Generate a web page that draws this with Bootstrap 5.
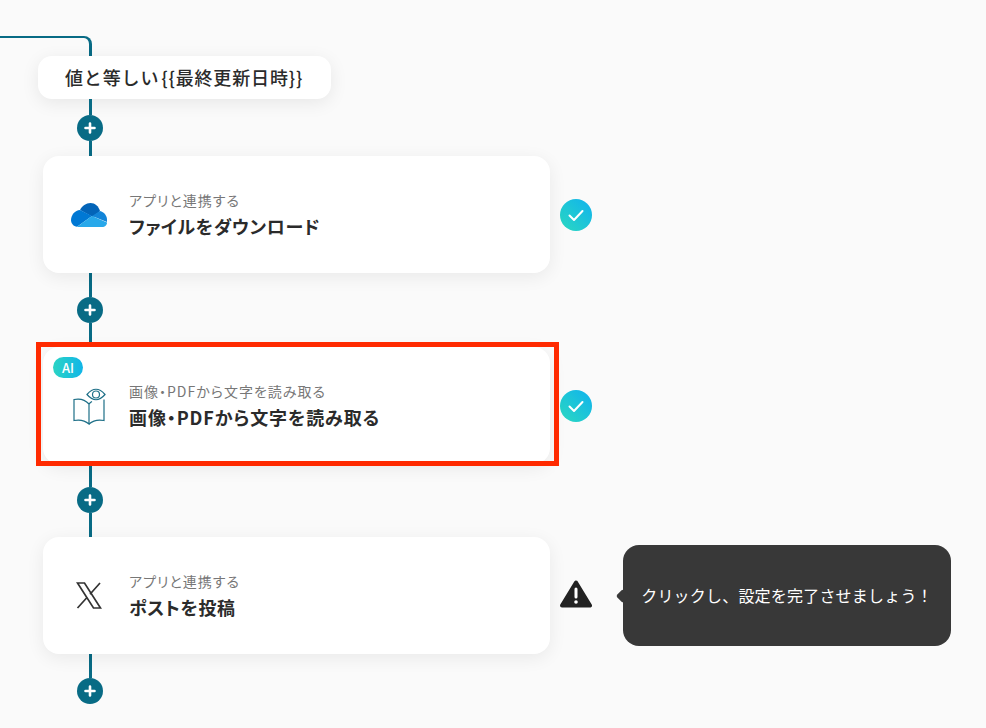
<!DOCTYPE html>
<html lang="ja">
<head>
    <meta charset="UTF-8">
    <title>フロー</title>
    <meta name="viewport" content="width=device-width, initial-scale=1">
    <link href="https://cdn.jsdelivr.net/npm/bootstrap@5.3.3/dist/css/bootstrap.min.css" rel="stylesheet">
    <style>
        body {
            background: #fafafa;
            color: #2b2b2b;
            font-family: "Noto Sans CJK JP", "Noto Sans", sans-serif;
            overflow: hidden;
        }
        .top-line {
            width: 92px;
            height: 20px;
            margin-top: 36px;
            border-top: 2px solid #086b85;
            border-right: 3px solid #086b85;
            border-top-right-radius: 8px;
        }
        .cond-pill {
            width: 293px;
            height: 43px;
            margin-left: 38px;
            padding-left: 27px;
            background: #fff;
            border-radius: 14px;
            font-size: 18px;
            font-weight: 500;
            letter-spacing: .85px;
            word-spacing: -3px;
            box-shadow: 0 4px 18px rgba(0, 0, 0, .08);
        }
        .flow-wrap { margin-left: 43px; }
        .link-box { width: 26px; margin-left: 34px; }
        .link-line { width: 3px; background: #086b85; flex: 1 1 0; }
        .link-plus {
            width: 26px;
            height: 26px;
            border-radius: 50%;
            background: #086b85;
            flex: none;
        }
        .link-a { height: 57px; }
        .link-b { height: 74px; }
        .link-c { height: 73px; }
        .link-c .link-line:first-child { flex: 0 0 23px; }
        .link-end { height: 50px; }
        .flow-card {
            width: 507px;
            height: 117px;
            padding-left: 28px;
            gap: 22px;
            border: 0;
            border-radius: 16px;
            background: #fff;
            box-shadow: 0 4px 18px rgba(0, 0, 0, .07);
            flex: none;
        }
        .icon-cell { width: 36px; }
        .step-sub {
            font-size: 14px;
            line-height: 20px;
            color: #777;
            font-feature-settings: "palt";
            letter-spacing: 1px;
        }
        .step-title {
            font-size: 18px;
            line-height: 28px;
            font-weight: 700;
            color: #2b2b2b;
            margin-top: 2px;
            font-feature-settings: "palt";
            letter-spacing: .65px;
        }
        .step-title-wide { letter-spacing: .9px; }
        .state-icon { margin-left: 10px; flex: none; }
        .red-frame {
            top: -5px;
            left: -7px;
            width: 523px;
            height: 124px;
            border: 5px solid #ff2a00;
            pointer-events: none;
        }
        .ai-tag {
            top: 10px;
            left: 10px;
            width: 30px;
            height: 21px;
            border-radius: 11px;
            background: linear-gradient(90deg, #2bd4c4, #11b5e8);
            color: #fff;
            font-size: 13px;
            font-weight: 500;
            z-index: 1;
        }
        .hint-box {
            width: 328px;
            height: 101px;
            margin-left: 31px;
            padding-bottom: 2px;
            background: #383838;
            color: #fff;
            border-radius: 16px;
            font-size: 16px;
            letter-spacing: .2px;
        }
        .hint-box::before {
            content: "";
            position: absolute;
            left: -5px;
            top: 50%;
            width: 10px;
            height: 10px;
            margin-top: -5px;
            background: #383838;
            transform: rotate(45deg);
            border-radius: 2px;
        }
    </style>
</head>
<body>

    <div class="top-line"></div>
    <div class="cond-pill d-flex align-items-center">値と等しい {{最終更新日時}}</div>

    <div class="flow-wrap">
        <div class="link-box link-a d-flex flex-column align-items-center">
            <div class="link-line"></div>
            <div class="link-plus d-flex align-items-center justify-content-center">
                <svg width="12" height="12" viewBox="0 0 12 12"><path d="M6 1.500v9M1.500 6h9" stroke="#fff" stroke-width="2.600" stroke-linecap="round"/></svg>
            </div>
            <div class="link-line"></div>
        </div>

        <div class="d-flex align-items-center">
            <div class="card flow-card flex-row align-items-center">
                <div class="icon-cell d-flex justify-content-center">
                    <svg width="36" height="24" viewBox="0 0 36 24">
                        <path d="M9 7C11 3 15 0 19.500 0 24 0 27.500 3 29 8L22 14z" fill="#0364b8"/>
                        <path d="M29 8c4 1 7 4.500 7 9v2L21 13z" fill="#1284d8"/>
                        <path d="M9 7C4 7.500 0 12 0 17c0 3.500 2.500 6.500 6 6.800L21 13z" fill="#0078d4"/>
                        <path d="M6 24c-.5 0 15-11 15-11l15 6.500c0 2.500-2 4.500-5 4.500z" fill="#28a8ea"/>
                    </svg>
                </div>
                <div>
                    <div class="step-sub">アプリと連携する</div>
                    <div class="step-title">ファイルをダウンロード</div>
                </div>
            </div>
            <svg class="state-icon" width="32" height="32" viewBox="0 0 32 32">
                <defs><linearGradient id="okGrad" x1="0" y1="1" x2="1" y2="0"><stop offset="0" stop-color="#2bd9c0"/><stop offset="1" stop-color="#10b2ee"/></linearGradient></defs>
                <circle cx="16" cy="16" r="16" fill="url(#okGrad)"/>
                <path d="M9.500 16.500l4.500 4.500 8.500-9" fill="none" stroke="#fff" stroke-width="2" stroke-linecap="round" stroke-linejoin="round"/>
            </svg>
        </div>

        <div class="link-box link-b d-flex flex-column align-items-center">
            <div class="link-line"></div>
            <div class="link-plus d-flex align-items-center justify-content-center">
                <svg width="12" height="12" viewBox="0 0 12 12"><path d="M6 1.500v9M1.500 6h9" stroke="#fff" stroke-width="2.600" stroke-linecap="round"/></svg>
            </div>
            <div class="link-line"></div>
        </div>

        <div class="d-flex align-items-center">
            <div class="card flow-card flex-row align-items-center position-relative">
                <span class="ai-tag position-absolute d-flex align-items-center justify-content-center">AI</span>
                <div class="icon-cell d-flex justify-content-center">
                    <svg width="34" height="38" viewBox="0 0 34 38" fill="none" stroke="#1d6f87" stroke-width="1.200">
                        <path d="M2 12.500c5-1 11 0 15 4.500v20c-4-3.500-10-4.500-15-3.500z"/>
                        <path d="M17 17c1-1.200 2-2 3-2.500M32 12.500v21c-5-1-11 0-15 3.500"/>
                        <path d="M15 7.500Q24 -3 33 7.500 24 18 15 7.500z" fill="#fff"/>
                        <circle cx="24" cy="7.500" r="3.500"/>
                    </svg>
                </div>
                <div>
                    <div class="step-sub">画像・PDFから文字を読み取る</div>
                    <div class="step-title step-title-wide">画像・PDFから文字を読み取る</div>
                </div>
                <div class="red-frame position-absolute"></div>
            </div>
            <svg class="state-icon" width="32" height="32" viewBox="0 0 32 32">
                <circle cx="16" cy="16" r="16" fill="url(#okGrad)"/>
                <path d="M9.500 16.500l4.500 4.500 8.500-9" fill="none" stroke="#fff" stroke-width="2" stroke-linecap="round" stroke-linejoin="round"/>
            </svg>
        </div>

        <div class="link-box link-c d-flex flex-column align-items-center">
            <div class="link-line"></div>
            <div class="link-plus d-flex align-items-center justify-content-center">
                <svg width="12" height="12" viewBox="0 0 12 12"><path d="M6 1.500v9M1.500 6h9" stroke="#fff" stroke-width="2.600" stroke-linecap="round"/></svg>
            </div>
            <div class="link-line"></div>
        </div>

        <div class="d-flex align-items-center">
            <div class="card flow-card flex-row align-items-center">
                <div class="icon-cell d-flex justify-content-center">
                    <svg width="26" height="27" viewBox="0 0 26 27" fill="none" stroke="#333" stroke-width="1.700">
                        <path d="M1.500 1h7l16 25h-7z"/>
                        <path d="M24 1L14 12.200M11 15.500L1.500 26"/>
                    </svg>
                </div>
                <div>
                    <div class="step-sub">アプリと連携する</div>
                    <div class="step-title">ポストを投稿</div>
                </div>
            </div>
            <svg class="state-icon" width="32" height="32" viewBox="0 0 32 32">
                <path d="M16 2.500L30 25.500H2z" fill="#222" stroke="#222" stroke-width="4" stroke-linejoin="round"/>
                <path d="M16 9v8" stroke="#fff" stroke-width="3" stroke-linecap="round"/>
                <circle cx="16" cy="22" r="1.800" fill="#fff"/>
            </svg>
            <div class="hint-box position-relative d-flex align-items-center justify-content-center">クリックし、設定を完了させましょう！</div>
        </div>

        <div class="link-box link-end d-flex flex-column align-items-center">
            <div class="link-line"></div>
            <div class="link-plus d-flex align-items-center justify-content-center">
                <svg width="12" height="12" viewBox="0 0 12 12"><path d="M6 1.500v9M1.500 6h9" stroke="#fff" stroke-width="2.600" stroke-linecap="round"/></svg>
            </div>
        </div>
    </div>

    <script src="https://cdn.jsdelivr.net/npm/bootstrap@5.3.3/dist/js/bootstrap.bundle.min.js"></script>
</body>
</html>
